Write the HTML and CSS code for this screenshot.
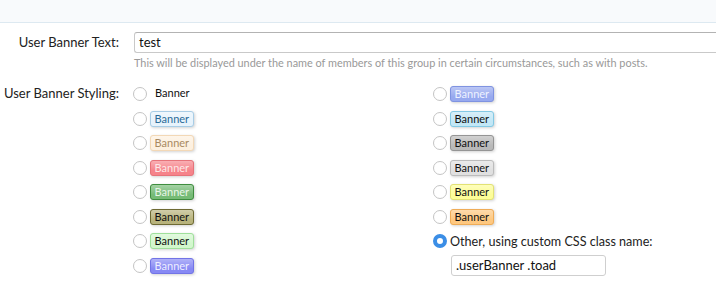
FILE: index.html
```html
<!DOCTYPE html>
<html>
<head>
<meta charset="utf-8">
<link rel="stylesheet" href="styles.css">
</head>
<body>
<div class="topbar"></div>
<div class="form">
  <dl class="ctrl">
    <dt><label>User Banner Text:</label></dt>
    <dd>
      <div class="textbox wide">test</div>
      <p class="explain">This will be displayed under the name of members of this group in certain circumstances, such as with posts.</p>
    </dd>
  </dl>
  <dl class="ctrl styling">
    <dt><label>User Banner Styling:</label></dt>
    <dd>
      <ul class="choices">
        <li><span class="radio"></span><span class="banner hidden">Banner</span></li>
        <li><span class="radio"></span><span class="banner primary">Banner</span></li>
        <li><span class="radio"></span><span class="banner secondary">Banner</span></li>
        <li><span class="radio"></span><span class="banner red">Banner</span></li>
        <li><span class="radio"></span><span class="banner green">Banner</span></li>
        <li><span class="radio"></span><span class="banner olive">Banner</span></li>
        <li><span class="radio"></span><span class="banner lightgreen">Banner</span></li>
        <li><span class="radio"></span><span class="banner blue">Banner</span></li>
        <li><span class="radio"></span><span class="banner royalblue">Banner</span></li>
        <li><span class="radio"></span><span class="banner skyblue">Banner</span></li>
        <li><span class="radio"></span><span class="banner gray">Banner</span></li>
        <li><span class="radio"></span><span class="banner silver">Banner</span></li>
        <li><span class="radio"></span><span class="banner yellow">Banner</span></li>
        <li><span class="radio"></span><span class="banner orange">Banner</span></li>
        <li><span class="radio checked"></span><span class="other">Other, using custom CSS class name:</span></li>
        <li class="inputrow"><div class="textbox custom">.userBanner .toad</div></li>
      </ul>
    </dd>
  </dl>
</div>
</body>
</html>
```
FILE: styles.css
```css
html, body {
  margin: 0;
  padding: 0;
  background: #ffffff;
  overflow: hidden;
}
body {
  font-family: Lato, "Liberation Sans", sans-serif;
  font-size: 13px;
  color: #222222;
  width: 716px;
  height: 300px;
}
.topbar {
  height: 22px;
  background: #f8fafc;
  border-bottom: 1px solid #dde9f1;
}
.form {
  width: 716px;
}
.ctrl {
  display: flex;
  margin: 0;
  gap: 15px;
}
.ctrl dt {
  width: 119px;
  flex: none;
  text-align: right;
  margin: 0;
}
.ctrl dd {
  margin: 0;
  flex: 1;
  min-width: 0;
}
.ctrl:first-child {
  padding-top: 9px;
}
.ctrl:first-child dt {
  padding-top: 3px;
  line-height: 15px;
}
.textbox {
  box-sizing: border-box;
  height: 21px;
  border: 1px solid #c9c9c9;
  border-top-color: #b3b3b3;
  border-radius: 3px;
  background: #fff;
  padding: 0 4px;
  line-height: 19px;
  font-size: 13px;
  color: #111;
}
.textbox.wide {
  width: 100%;
  border-right: none;
  border-radius: 3px 0 0 3px;
}
.explain {
  margin: 3px 0 0 0;
  font-size: 10.9px;
  line-height: 14px;
  color: #999999;
  white-space: nowrap;
}
.styling {
  margin-top: 12px;
}
.styling dt {
  padding-top: 4px;
  line-height: 15px;
}
.choices {
  list-style: none;
  margin: 0 0 0 -1px;
  padding: 0;
  display: grid;
  grid-template-columns: 300px 280px;
  grid-template-rows: repeat(8, 24.5px);
  grid-auto-flow: column;
}
.choices li {
  display: flex;
  align-items: center;
  gap: 3px;
}
.radio {
  box-sizing: border-box;
  width: 14px;
  height: 14px;
  border-radius: 50%;
  border: 1px solid #c4c4c4;
  background: #fff;
  flex: none;
}
.radio.checked {
  border: 4px solid #3b8ee6;
  background: #fff;
}
.other {
  color: #222;
  font-size: 12.6px;
}
.inputrow {
  padding-left: 18px;
}
.textbox.custom {
  width: 155px;
  border-color: #cfcfcf;
}
.banner {
  box-sizing: border-box;
  font-size: 11px;
  line-height: 14px;
  height: 16px;
  padding: 0 3.5px;
  border: 1px solid transparent;
  border-radius: 3px;
  box-shadow: 1px 1px 3px rgba(0, 0, 0, 0.18);
  background-image: linear-gradient(to bottom, rgba(255,255,255,0.35), rgba(255,255,255,0) 70%);
}
.banner.hidden {
  background: none;
  box-shadow: none;
  border: none;
  color: #111;
  padding: 0 5px;
}
.banner.primary { color: #2b6b98; background-color: #e7f3fc; border-color: #a8cde6; }
.banner.secondary { color: #a98a62; background-color: #fdf0df; border-color: #f3d8b6; }
.banner.red { color: #fde8e8; background-color: #f6838a; border-color: #e6737a; }
.banner.green { color: #e8f5e8; background-color: #76bb76; border-color: #3f8d3f; }
.banner.olive { color: #111; background-color: #b8b37c; border-color: #6e6a33; }
.banner.lightgreen { color: #111; background-color: #d2f7cd; border-color: #9fe09b; }
.banner.blue { color: #eef; background-color: #8789f4; border-color: #7274e6; }
.banner.royalblue { color: #eef2ff; background-color: #97a9ef; border-color: #7f93e1; }
.banner.skyblue { color: #111; background-color: #c2e7f6; border-color: #83c9e4; }
.banner.gray { color: #111; background-color: #b9b9b9; border-color: #959595; }
.banner.silver { color: #111; background-color: #e0e0e0; border-color: #bcbcbc; }
.banner.yellow { color: #111; background-color: #fdfd98; border-color: #e2e274; }
.banner.orange { color: #111; background-color: #fec880; border-color: #efac57; }
```
